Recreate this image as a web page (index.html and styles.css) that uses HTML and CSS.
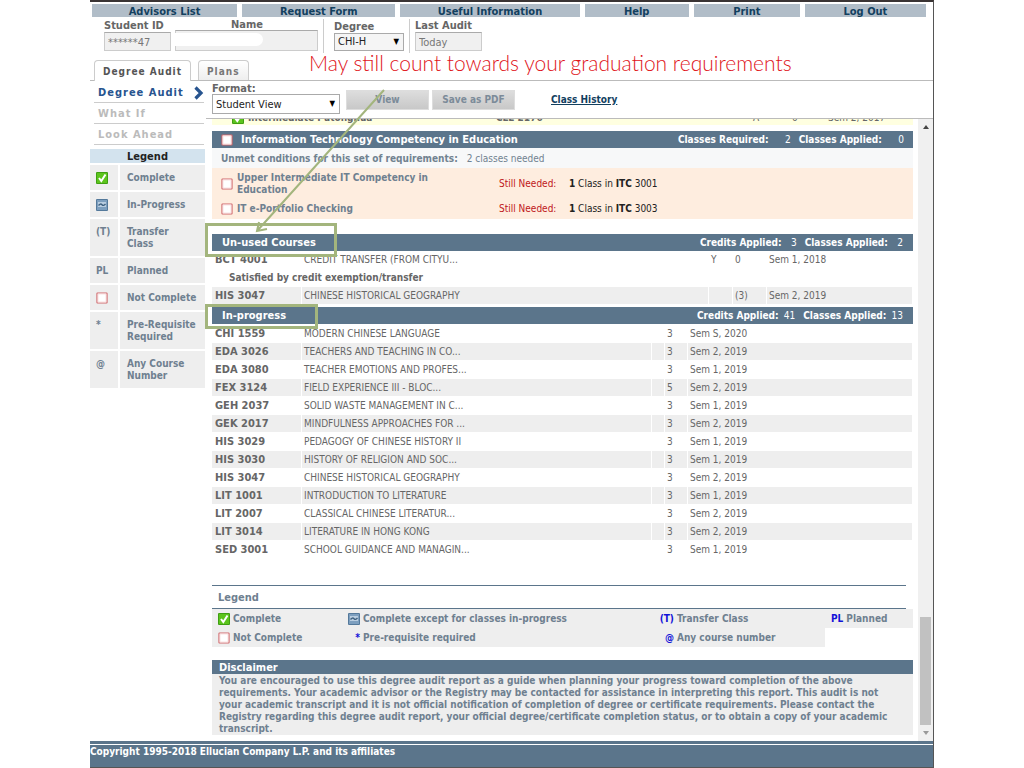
FILE: index.html
```html
<!DOCTYPE html>
<html lang="en">
<head>
<meta charset="utf-8">
<title>Degree Audit</title>
<link rel="stylesheet" href="styles.css">
</head>
<body>
<svg class="defs" width="0" height="0" aria-hidden="true">
  <symbol id="i-done" viewBox="0 0 12 12"><rect width="12" height="12" rx="1" fill="#3f9f12"/><rect x="1" y="1" width="10" height="10" fill="#5cc41c"/><path d="M3 6l2.300 3L9.500 2.500" fill="none" stroke="#fff" stroke-width="2"/></symbol>
  <symbol id="i-prog" viewBox="0 0 12 12"><rect width="12" height="12" rx="1" fill="#54799b"/><rect x="1" y="1" width="10" height="10" fill="#7d9fbf"/><rect x="2" y="3" width="8" height="5" fill="#b9cde0"/><path d="M2.500 6.500q2-2.500 3.500-.8t3.500-.7" fill="none" stroke="#3e6180" stroke-width="1.300"/></symbol>
  <symbol id="i-open" viewBox="0 0 12 12"><rect x="1" y="1" width="10" height="10" rx=".5" fill="#fff" stroke="#d0686c" stroke-width="1.200"/><rect x="2" y="2" width="8" height="8" fill="none" stroke="#f7dcdc" stroke-width=".8"/></symbol>
</svg>
<div class="app">
  <nav class="menu">
    <a href="#">Advisors List</a><a href="#">Request Form</a><a href="#">Useful Information</a><a href="#">Help</a><a href="#">Print</a><a href="#">Log Out</a>
  </nav>
  <header class="student">
    <div class="field id"><label for="sid">Student ID</label><input id="sid" value="******47" readonly></div>
    <div class="field name"><label for="sname">Name</label><input id="sname" readonly><span class="mask"></span></div>
    <div class="field ruled"><label for="degree">Degree</label><div class="pick"><select id="degree"><option>CHI-H</option></select></div></div>
    <div class="field ruled last"><label for="audit">Last Audit</label><input id="audit" value="Today" readonly></div>
  </header>
  <div class="tabs"><a class="tab on" href="#">Degree Audit</a><a class="tab" href="#">Plans</a></div>
  <div class="body">
    <aside class="side">
      <nav class="sub">
        <a class="on" href="#">Degree Audit<svg width="10" height="14" viewBox="0 0 10 14"><path d="M1.500 1.500L7 7l-5.500 5.500" fill="none" stroke="#27548f" stroke-width="3.200"/></svg></a>
        <a href="#">What If</a>
        <a href="#">Look Ahead</a>
      </nav>
      <h2>Legend</h2>
      <dl class="key">
        <dt><svg class="ico"><use href="#i-done"/></svg></dt><dd>Complete</dd>
        <dt><svg class="ico"><use href="#i-prog"/></svg></dt><dd>In-Progress</dd>
        <dt>(T)</dt><dd>Transfer<br>Class</dd>
        <dt>PL</dt><dd>Planned</dd>
        <dt><svg class="ico"><use href="#i-open"/></svg></dt><dd>Not Complete</dd>
        <dt>*</dt><dd>Pre-Requisite<br>Required</dd>
        <dt>@</dt><dd>Any Course<br>Number</dd>
      </dl>
    </aside>
    <main class="main">
      <form class="tools">
        <div class="format"><label for="format">Format:</label><div class="pick"><select id="format"><option>Student View</option></select></div></div>
        <div class="buttons"><button type="button">View</button><button type="button">Save as PDF</button></div>
        <a class="history" href="#">Class History</a>
      </form>
      <div class="viewport">
        <div class="report">
          <div class="scrolled"><div class="scrolled-row"><svg class="ico"><use href="#i-done"/></svg><b>Intermediate Putonghua</b><b>CLE 2176</b><span>A</span><span>0</span><span>Sem 2, 2017</span></div></div>
          <section>
            <h3 class="bar"><svg class="ico"><use href="#i-open"/></svg><span class="title">Information Technology Competency in Education</span><span class="stat">Classes Required: <i class="wide">2</i></span><span class="stat">Classes Applied: <i class="wide">0</i></span></h3>
            <p class="unmet"><b>Unmet conditions for this set of requirements:</b><span>2 classes needed</span></p>
            <div class="needs">
              <div class="need tall"><svg class="ico"><use href="#i-open"/></svg><b class="what">Upper Intermediate IT Competency in Education</b><span class="still">Still Needed:</span><span class="need-text"><b>1</b> Class in <b>ITC</b> 3001</span></div>
              <div class="need"><svg class="ico"><use href="#i-open"/></svg><b class="what">IT e-Portfolio Checking</b><span class="still">Still Needed:</span><span class="need-text"><b>1</b> Class in <b>ITC</b> 3003</span></div>
            </div>
          </section>
          <section class="unused">
            <h3 class="bar"><span class="title">Un-used Courses</span><span class="stat">Credits Applied: <i>3</i></span><span class="stat">Classes Applied: <i>2</i></span></h3>
            <table class="courses">
              <colgroup><col class="c-code"><col><col class="c-flag"><col class="c-cr"><col class="c-term"></colgroup>
              <tr><th>BCT 4001</th><td>CREDIT TRANSFER (FROM CITYU...</td><td>Y</td><td>0</td><td>Sem 1, 2018</td></tr>
              <tr class="note"><th colspan="5">Satisfied by credit exemption/transfer</th></tr>
              <tr class="alt"><th>HIS 3047</th><td>CHINESE HISTORICAL GEOGRAPHY</td><td></td><td>(3)</td><td>Sem 2, 2019</td></tr>
            </table>
          </section>
          <section class="progress">
            <h3 class="bar"><span class="title">In-progress</span><span class="stat">Credits Applied: <i>41</i></span><span class="stat">Classes Applied: <i>13</i></span></h3>
            <table class="courses striped">
              <colgroup><col class="c-code"><col><col class="c-gap"><col class="c-num"><col class="c-sem"></colgroup>
              <tr><th>CHI 1559</th><td>MODERN CHINESE LANGUAGE</td><td></td><td>3</td><td>Sem S, 2020</td></tr>
              <tr><th>EDA 3026</th><td>TEACHERS AND TEACHING IN CO...</td><td></td><td>3</td><td>Sem 2, 2019</td></tr>
              <tr><th>EDA 3080</th><td>TEACHER EMOTIONS AND PROFES...</td><td></td><td>3</td><td>Sem 1, 2019</td></tr>
              <tr><th>FEX 3124</th><td>FIELD EXPERIENCE III - BLOC...</td><td></td><td>5</td><td>Sem 2, 2019</td></tr>
              <tr><th>GEH 2037</th><td>SOLID WASTE MANAGEMENT IN C...</td><td></td><td>3</td><td>Sem 1, 2019</td></tr>
              <tr><th>GEK 2017</th><td>MINDFULNESS APPROACHES FOR ...</td><td></td><td>3</td><td>Sem 2, 2019</td></tr>
              <tr><th>HIS 3029</th><td>PEDAGOGY OF CHINESE HISTORY II</td><td></td><td>3</td><td>Sem 1, 2019</td></tr>
              <tr><th>HIS 3030</th><td>HISTORY OF RELIGION AND SOC...</td><td></td><td>3</td><td>Sem 1, 2019</td></tr>
              <tr><th>HIS 3047</th><td>CHINESE HISTORICAL GEOGRAPHY</td><td></td><td>3</td><td>Sem 2, 2019</td></tr>
              <tr><th>LIT 1001</th><td>INTRODUCTION TO LITERATURE</td><td></td><td>3</td><td>Sem 1, 2019</td></tr>
              <tr><th>LIT 2007</th><td>CLASSICAL CHINESE LITERATUR...</td><td></td><td>3</td><td>Sem 2, 2019</td></tr>
              <tr><th>LIT 3014</th><td>LITERATURE IN HONG KONG</td><td></td><td>3</td><td>Sem 2, 2019</td></tr>
              <tr><th>SED 3001</th><td>SCHOOL GUIDANCE AND MANAGIN...</td><td></td><td>3</td><td>Sem 1, 2019</td></tr>
            </table>
          </section>
          <h4 class="legend-head">Legend</h4>
          <div class="legend">
            <span class="item"><svg class="ico"><use href="#i-done"/></svg>Complete</span>
            <span class="item"><svg class="ico"><use href="#i-prog"/></svg>Complete except for classes in-progress</span>
            <span class="item"><em class="wide">(T)</em>Transfer Class</span>
            <span class="item"><em>PL</em>Planned</span>
            <span class="item"><svg class="ico"><use href="#i-open"/></svg>Not Complete</span>
            <span class="item"><em>*</em>Pre-requisite required</span>
            <span class="item"><em class="wide">@</em>Any course number</span>
          </div>
          <section class="disclaimer">
            <h4>Disclaimer</h4>
            <p>You are encouraged to use this degree audit report as a guide when planning your progress toward completion of the above requirements. Your academic advisor or the Registry may be contacted for assistance in interpreting this report. This audit is not your academic transcript and it is not official notification of completion of degree or certificate requirements. Please contact the Registry regarding this degree audit report, your official degree/certificate completion status, or to obtain a copy of your academic transcript.</p>
          </section>
        </div>
        <div class="scroll">
          <svg width="8" height="5"><path d="M1 5l3-4 3 4z" fill="#444"/></svg>
          <div class="thumb"></div>
          <svg width="8" height="5"><path d="M1 0l3 4 3-4z" fill="#999"/></svg>
        </div>
      </div>
    </main>
  </div>
  <footer>Copyright 1995-2018 Ellucian Company L.P. and its affiliates</footer>
  <p class="remark">May still count towards your graduation requirements</p>
  <svg class="arrow" width="136" height="146" viewBox="0 0 136 146"><path d="M131 2L4 143M6 134L4 143l10-2" fill="none" stroke="#a3b57d" stroke-width="2"/></svg>
  <span class="ring ring-unused"></span>
  <span class="ring ring-progress"></span>
</div>
</body>
</html>
```
FILE: styles.css
```css
* { box-sizing: border-box; }
body { margin: 0; background: #fff; color: #666; font: 10px/12px "DejaVu Sans Condensed", "DejaVu Sans", sans-serif; }
h2, h3, h4, p, dl, dd { margin: 0; }
a { color: inherit; text-decoration: none; }
i, em { font-style: normal; }
input, select, button { font: inherit; color: inherit; margin: 0; border-radius: 0; }
.defs { position: absolute; }
.ico { width: 12px; height: 12px; flex: none; display: block; }

.app { position: relative; display: flex; flex-direction: column; min-height: 100vh; margin: 0 90px; border-top: 2px solid #3a3434; border-right: 1px solid #555; }

.menu { display: grid; grid-template-columns: 145fr 153fr 179fr 104fr 106fr 121fr; gap: 5px; padding: 2px 7px 0 2px; }
.menu a { height: 13px; background: #b1bdc8; color: #12405f; font-size: 11px; font-weight: bold; line-height: 15px; text-align: center; }

.student { display: flex; height: 43px; padding: 2px 0 0 14px; font-size: 11px; }
.field { position: relative; display: flex; flex-direction: column; width: 67px; }
.field label { font-weight: bold; line-height: 13px; white-space: nowrap; }
.field input { width: 100%; height: 19px; padding: 1px 3px 0; border: 1px solid #ccc; border-top-color: #aaa; background: #f0f0f0; color: #777; }
.field.name { width: 143px; margin-left: 4px; }
.name label { padding-left: 56px; line-height: 11px; }
.name input { height: 21px; }
.mask { position: absolute; left: 0; top: 14px; width: 88px; height: 13px; border-radius: 0 7px 7px 0; background: #fff; }
.ruled { width: 81px; height: 34px; margin-left: 5px; padding-left: 10px; border-left: 1px solid #ccc; }
.ruled.last { width: 73px; padding-left: 5px; }
.ruled label { padding-top: 1px; }
.last label { padding-top: 0; }
.pick { position: relative; }
.pick::after { content: "▼"; position: absolute; right: 5px; top: 4px; color: #000; font-size: 8px; line-height: 10px; pointer-events: none; }
.pick select { display: block; width: 100%; height: 18px; padding: 0 3px; border: 1px solid #aaa; background: #f5f5f5; color: #222; appearance: none; }

.tabs { display: flex; align-items: flex-end; gap: 7px; height: 21px; padding-left: 4px; border-bottom: 1px solid #bbb; }
.tab { height: 20px; padding: 0 8px; border: 1px solid #ccc; border-bottom: 0; border-radius: 4px 4px 0 0; background: linear-gradient(#fff, #eee); color: #777; font-size: 10px; font-weight: bold; line-height: 21px; letter-spacing: 1px; }
.tab.on { height: 21px; margin-bottom: -1px; background: #fff; color: #555; }

.body { display: flex; flex: 1; }
.side { width: 116px; padding: 1px 1px 0 0; }
.sub { padding: 0 1px 0 4px; }
.sub a { display: flex; justify-content: space-between; align-items: center; height: 21px; padding: 1px 0 0 4px; border-bottom: 1px solid #ccc; color: #bbb; font-size: 11px; font-weight: bold; letter-spacing: 1px; }
.sub .on { color: #27548f; }
.side h2 { height: 14px; margin: 4px 0 2px; background: #d3e3ee; color: #222; font-size: 11px; line-height: 15px; text-align: center; }
.key { display: grid; grid-template-columns: 28px 1fr; gap: 2px; color: #6f8090; font-size: 10px; font-weight: bold; }
.key dt, .key dd { padding: 7px 6px 6px; background: #eee; line-height: 12px; white-space: nowrap; }
.key dd { padding-left: 7px; }

.main { display: flex; flex-direction: column; flex: 1; min-width: 0; }
.tools { display: flex; height: 38px; padding: 0 0 0 6px; border-bottom: 1px solid #bbb; font-size: 11px; }
.format { width: 128px; }
.format label { display: block; height: 13px; font-weight: bold; line-height: 15px; }
.format select { height: 20px; padding-top: 1px; background: #fff; }
.format .pick::after { top: 5px; }
.buttons { display: flex; gap: 3px; padding: 9px 0 0 6px; }
.buttons button { width: 83px; height: 20px; padding: 0; border: 1px solid #ddd; background: linear-gradient(#ddd, #c8c8c8); color: #7c8b99; font-size: 10px; font-weight: bold; }
.history { margin: 13px 0 0 36px; color: #12405f; font-size: 10px; font-weight: bold; text-decoration: underline; }

.viewport { display: flex; flex: 1; }
.report { flex: 1; min-width: 0; padding: 0 5px 4px 6px; }
.scroll { display: flex; flex-direction: column; align-items: center; width: 15px; padding: 5px 0; background: #f0f0f0; }
.thumb { width: 11px; height: 108px; margin: auto 0 6px; background: #c1c1c1; }

.scrolled { height: 6px; margin-bottom: 6px; overflow: hidden; background: #ffffe0; }
.scrolled-row { display: grid; grid-template-columns: 16px 248px 257px 39px 36px 1fr; height: 18px; margin-top: -7px; padding-left: 20px; }

.bar { display: flex; align-items: center; height: 17px; padding: 1px 9px 0; background: #5b758b; color: #fff; font-size: 11px; }
.bar .ico { margin: 0 8px 1px 0; }
.title { flex: 1; }
.stat { margin-left: 8px; font-size: 10px; white-space: pre; }
.stat i { display: inline-block; min-width: 10px; margin-left: 2px; text-align: right; font-weight: normal; }
.stat i.wide { min-width: 17px; }
.unmet { display: flex; gap: 9px; height: 20px; padding: 0 9px; background: #f7f8f9; color: #718290; line-height: 21px; }
.needs { padding-top: 1px; background: #feeddf; }
.need { display: grid; grid-template-columns: 16px 262px 70px 1fr; align-items: center; height: 21px; padding-left: 9px; color: #222; }
.need.tall { height: 29px; }
.what { color: #6f8090; max-width: 215px; }
.still { color: #bf1620; }
.unused { margin: 15px 0 2px; }
.unused .bar, .progress .bar { padding: 1px 10px 0; }
.progress .courses { margin-top: 1px; }

.courses { width: 100%; border-spacing: 0; table-layout: fixed; }
.courses tr { height: 18px; }
.courses th, .courses td { padding: 1px 2px 0; text-align: left; white-space: nowrap; border-bottom: 1px solid #fff; border-right: 1px solid #fff; }
.courses th { padding-left: 3px; font-size: 11px; }
.courses .note th { padding-left: 17px; font-size: 10px; }
.alt, .striped tr:nth-child(even) { background: #eee; }
.c-code { width: 90px; }
.c-flag { width: 24px; }
.c-cr { width: 34px; }
.c-term { width: 146px; }
.c-gap { width: 13px; }
.c-num { width: 23px; }
.c-sem { width: 225px; }

.legend-head { height: 24px; margin: 26px 7px 0 0; padding-left: 6px; border: solid #5b758b; border-width: 1px 0; color: #6f8090; font-size: 11px; line-height: 23px; }
.legend { display: grid; grid-template-columns: 130px 310px 1fr 88px; color: #6f8090; font-weight: bold; }
.item { display: flex; align-items: center; gap: 3px; height: 19px; padding-left: 6px; background: #eee; }
.item em { min-width: 12px; color: #1212d8; text-align: right; }
.item em.wide { min-width: 16px; }

.disclaimer { margin-top: 13px; color: #6f8090; font-weight: bold; }
.disclaimer h4 { height: 14px; padding-left: 7px; background: #5b758b; color: #fff; font-size: 11px; line-height: 15px; }
.disclaimer p { padding: 1px 20px 0 7px; background: #eee; font-size: 10px; line-height: 12px; }

footer { height: 27px; border-top: 3px solid #5b758b; border-bottom: 1px solid #555; background: #5b758b; box-shadow: inset 0 1px #fff; color: #fff; font-size: 10px; font-weight: bold; line-height: 16px; }

.remark { position: absolute; left: 219px; top: 48px; color: #e0141a; font: 300 21px/26px Lato, sans-serif; white-space: nowrap; }
.arrow { position: absolute; left: 163px; top: 86px; }
.ring { position: absolute; left: 115px; border: 3px solid #a3b57d; }
.ring-unused { top: 221px; width: 132px; height: 34px; }
.ring-progress { top: 302px; width: 113px; height: 25px; }
```
